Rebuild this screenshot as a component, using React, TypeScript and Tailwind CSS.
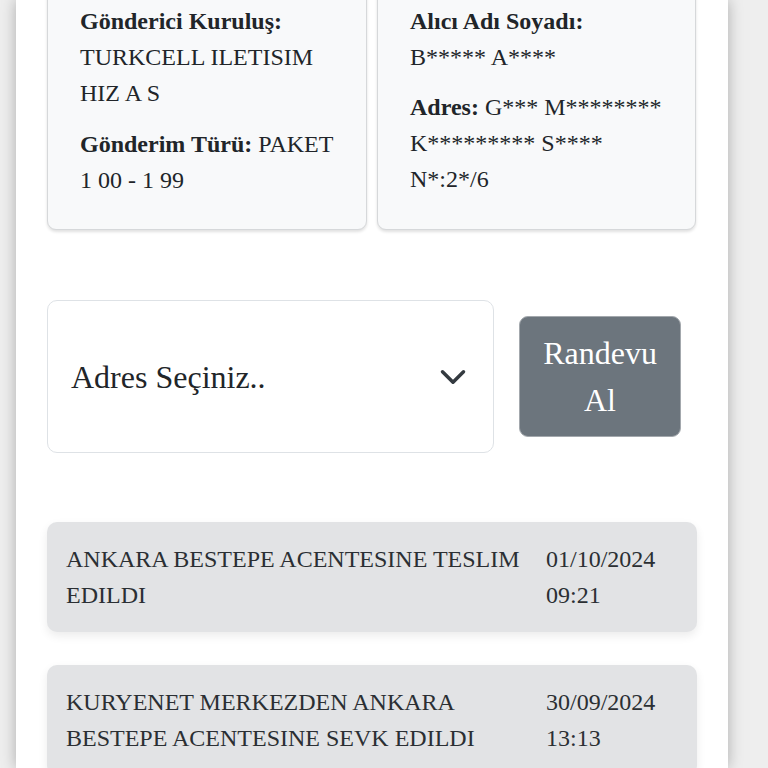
import React from "react";

function TimelineItem({ text, date, time }: { text: string; date: string; time: string }) {
  return (
    <div className="flex rounded-[10px] bg-[#e2e3e5] px-[19px] py-[19px] text-[24px] leading-[36px] text-[#2b2f33] shadow-[0_4px_10px_rgba(0,0,0,0.08)]">
      <div className="flex-1 pr-4">{text}</div>
      <div className="w-[132px] shrink-0">
        {date}
        <br />
        {time}
      </div>
    </div>
  );
}

export default function App() {
  return (
    <div className="h-[768px] w-[768px] overflow-hidden bg-[#eeeeee] font-['Liberation_Serif','Times_New_Roman',serif]">
      <div className="ml-[16px] flex h-[768px] w-[712px] flex-col bg-white px-[31px] shadow-[0_0_14px_rgba(0,0,0,0.28)]">
        <div className="-mt-[30px] flex gap-[10px]">
          <div className="w-[320px] rounded-[9px] border border-[#d6d8da] bg-[#f8f9fa] pb-[31px] pl-[32px] pr-[24px] pt-[32px] text-[24px] leading-[36px] text-[#212529] shadow-[0_2px_3px_rgba(0,0,0,0.12)]">
            <p className="mb-[15px] whitespace-nowrap">
              <b>Gönderici Kuruluş:</b>
              <br />
              TURKCELL ILETISIM
              <br />
              HIZ A S
            </p>
            <p className="whitespace-nowrap">
              <b>Gönderim Türü:</b> PAKET
              <br />1 00 - 1 99
            </p>
          </div>
          <div className="w-[319px] rounded-[9px] border border-[#d6d8da] bg-[#f8f9fa] pb-[31px] pl-[32px] pr-[24px] pt-[32px] text-[24px] leading-[36px] text-[#212529] shadow-[0_2px_3px_rgba(0,0,0,0.12)]">
            <p className="mb-[14px] whitespace-nowrap">
              <b>Alıcı Adı Soyadı:</b>
              <br />
              B***** A****
            </p>
            <p className="whitespace-nowrap">
              <b>Adres:</b> G*** M********
              <br />
              K********* S****
              <br />
              N*:2*/6
            </p>
          </div>
        </div>

        <div className="mt-[70px] flex items-center">
          <div className="flex h-[153px] w-[447px] items-center justify-between rounded-[10px] border border-[#dee2e6] bg-white pl-[23px] pr-[26px] text-[32px] leading-[48px] text-[#212529]">
            <span>Adres Seçiniz..</span>
            <svg width="28" height="28" viewBox="0 0 16 16" fill="none">
              <path d="M2 5l6 6 6-6" stroke="#343a40" strokeWidth="2" strokeLinecap="round" strokeLinejoin="round" />
            </svg>
          </div>
          <button className="ml-[25px] flex h-[121px] w-[162px] flex-col items-center justify-center rounded-[9px] border border-[#a3a8ad] bg-[#6c757d] text-center text-[32px] leading-[47px] text-white">
            <span>Randevu</span>
            <span>Al</span>
          </button>
        </div>

        <div className="mt-[69px] flex flex-col gap-[33px]">
          <TimelineItem text="ANKARA BESTEPE ACENTESINE TESLIM EDILDI" date="01/10/2024" time="09:21" />
          <TimelineItem text="KURYENET MERKEZDEN ANKARA BESTEPE ACENTESINE SEVK EDILDI" date="30/09/2024" time="13:13" />
        </div>
      </div>
    </div>
  );
}
